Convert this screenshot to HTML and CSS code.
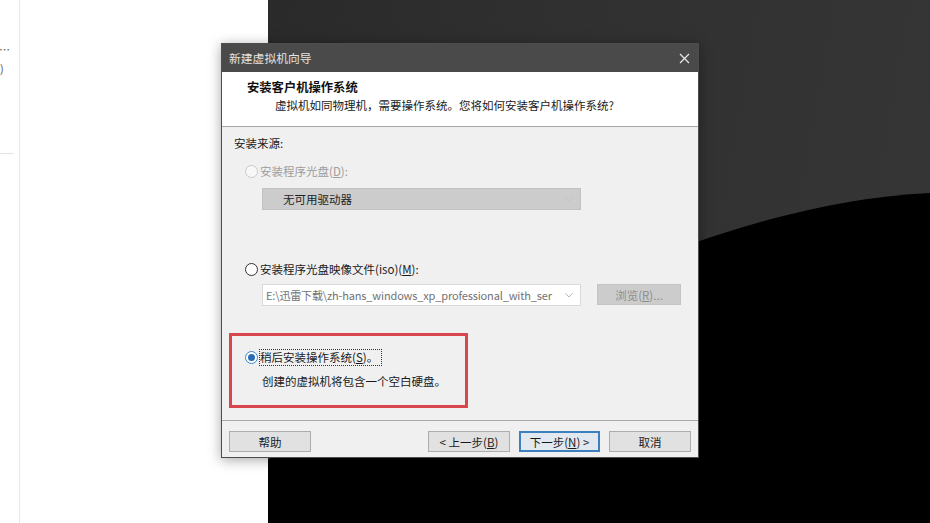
FILE: index.html
```html
<!DOCTYPE html>
<html lang="zh-CN">
<head>
<meta charset="utf-8">
<title>新建虚拟机向导</title>
<link rel="stylesheet" href="styles.css">
</head>
<body>
<div class="desktop">
  <div class="side">
    <div class="rail">
      <div class="rail-t1">…</div>
      <div class="rail-t2">)</div>
      <div class="rail-line"></div>
    </div>
  </div>
  <div class="dark">
    <svg class="curve" viewBox="0 0 662 523" preserveAspectRatio="none">
      <path d="M0,460 Q400,205 662,193 L662,523 L0,523 Z" fill="#000"/>
    </svg>
  </div>

  <div class="dialog">
    <div class="titlebar">
      <span class="title">新建虚拟机向导</span>
      <svg class="close" width="11" height="11" viewBox="0 0 11 11"><path d="M1 1L10 10M10 1L1 10" stroke="#e6e6e6" stroke-width="1.3" fill="none"/></svg>
    </div>
    <div class="header">
      <div class="h-title">安装客户机操作系统</div>
      <div class="h-sub">虚拟机如同物理机，需要操作系统。您将如何安装客户机操作系统?</div>
    </div>
    <div class="body">
      <div class="src-label">安装来源:</div>
      <div class="opt opt1 disabled">
        <span class="radio"></span><span>安装程序光盘(<u>D</u>):</span>
      </div>
      <div class="combo combo1">
        <span class="combo-text">无可用驱动器</span>
        <svg class="chev" width="8" height="5" viewBox="0 0 8 5"><path d="M0.5 0.5L4 4L7.5 0.5" stroke="#c4c4c4" fill="none"/></svg>
      </div>
      <div class="opt opt2">
        <span class="radio"></span><span>安装程序光盘映像文件(iso)(<u>M</u>):</span>
      </div>
      <div class="row2">
        <div class="combo combo2">
          <span class="combo-text">E:\迅雷下载\zh-hans_windows_xp_professional_with_ser</span>
          <svg class="chev" width="8" height="5" viewBox="0 0 8 5"><path d="M0.5 0.5L4 4L7.5 0.5" stroke="#b5b5b5" fill="none"/></svg>
        </div>
        <div class="btn btn-disabled browse"><span>浏览(<u>R</u>)...</span></div>
      </div>
      <div class="redbox">
        <div class="opt opt3">
          <span class="radio checked"></span><span class="focus">稍后安装操作系统(<u>S</u>)。</span>
        </div>
        <div class="opt3-desc">创建的虚拟机将包含一个空白硬盘。</div>
      </div>
    </div>
    <div class="footer">
      <div class="btn help">帮助</div>
      <div class="spacer"></div>
      <div class="btn back"><span>&lt; 上一步(<u>B</u>)</span></div>
      <div class="btn next"><span>下一步(<u>N</u>) &gt;</span></div>
      <div class="btn cancel">取消</div>
    </div>
  </div>
</div>
</body>
</html>
```
FILE: styles.css
```css
html, body {
  margin: 0;
  padding: 0;
}
body {
  width: 930px;
  height: 523px;
  overflow: hidden;
  font-family: "Noto Sans CJK SC", "Noto Sans", sans-serif;
  background: #fff;
}
.desktop {
  position: relative;
  display: flex;
  width: 930px;
  height: 523px;
  overflow: hidden;
}
.side {
  width: 268px;
  background: #fff;
  display: flex;
}
.rail {
  width: 19px;
  border-right: 1px solid #e8e8e8;
  font-size: 11px;
  color: #555;
  display: flex;
  flex-direction: column;
}
.rail-t1 {
  margin-top: 42px;
  line-height: 14px;
  margin-left: -1px;
}
.rail-t2 {
  margin-top: 5px;
  line-height: 14px;
}
.rail-line {
  margin-top: 78px;
  width: 14px;
  height: 1px;
  background: #e3e3e3;
}
.dark {
  flex: 1;
  position: relative;
  background: linear-gradient(100deg, #2a2a2a 0%, #303030 40%, #363636 100%);
}
.curve {
  position: absolute;
  left: 0;
  top: 0;
  width: 100%;
  height: 100%;
}

/* dialog window */
.dialog {
  position: absolute;
  left: 221px;
  top: 43px;
  width: 478px;
  height: 415px;
  box-sizing: border-box;
  border: 1px solid #4d4d4d;
  display: flex;
  flex-direction: column;
  box-shadow: 0 2px 12px rgba(0, 0, 0, 0.35);
  font-size: 11.5px;
  color: #1a1a1a;
  background: #f0f0f0;
}
.titlebar {
  height: 28px;
  flex: none;
  background: #4a4a4a;
  color: #e4e4e4;
  display: flex;
  align-items: center;
  justify-content: space-between;
  padding: 0 8px 0 7px;
}
.title {
  font-size: 11.8px;
  line-height: 16px;
}
.close {
  display: block;
}
.header {
  flex: none;
  height: 47px;
  background: #fff;
  border-bottom: 1px solid #a8a8a8;
  padding: 7px 0 0 25px;
}
.h-title {
  font-weight: bold;
  font-size: 12.3px;
  line-height: 16px;
  color: #111;
}
.h-sub {
  margin-top: 2px;
  margin-left: 28px;
  line-height: 16px;
  color: #1a1a1a;
}
.body {
  flex: 1;
  display: flex;
  flex-direction: column;
  align-items: flex-start;
  padding-top: 8px;
  background: #f0f0f0;
}
.src-label {
  margin-left: 12px;
  line-height: 16px;
}
.opt {
  display: flex;
  align-items: center;
  gap: 2px;
  line-height: 16px;
  height: 16px;
}
.opt1 {
  margin: 12px 0 0 23px;
}
.opt2 {
  margin: 51px 0 0 23px;
}
.disabled {
  color: #9d9d9d;
}
.radio {
  width: 13px;
  height: 13px;
  box-sizing: border-box;
  border-radius: 50%;
  border: 1px solid #333;
  background: #fff;
  position: relative;
  flex: none;
}
.disabled .radio {
  border-color: #cacaca;
  background: #f7f7f7;
}
.radio.checked {
  border-color: #3d86cf;
}
.radio.checked::after {
  content: "";
  position: absolute;
  left: 2px;
  top: 2px;
  width: 7px;
  height: 7px;
  border-radius: 50%;
  background: #2a6db5;
}
.combo {
  width: 319px;
  height: 22px;
  box-sizing: border-box;
  display: flex;
  align-items: center;
  justify-content: space-between;
  padding-right: 7px;
}
.combo1 {
  margin: 9px 0 0 40px;
  background: #cccccc;
  border: 1px solid #c2c2c2;
  padding-left: 20px;
  color: #1e1e1e;
}
.combo2 {
  background: #fff;
  border: 1px solid #dadada;
  padding-left: 3px;
  color: #727272;
}
.combo-text {
  white-space: nowrap;
  line-height: 16px;
}
.combo2 .combo-text {
  font-size: 11px;
  letter-spacing: -0.15px;
}
.chev {
  flex: none;
  display: block;
}
.row2 {
  display: flex;
  align-items: flex-start;
  margin: 7px 0 0 40px;
  gap: 16px;
}
.btn {
  height: 21px;
  box-sizing: border-box;
  display: flex;
  align-items: center;
  justify-content: center;
  border: 1px solid #adadad;
  background: #e1e1e1;
  color: #1a1a1a;
  flex: none;
  line-height: 16px;
  white-space: nowrap;
}
.btn-disabled {
  background: #cccccc;
  border-color: #c4c4c4;
  color: #8e8e8e;
}
.browse {
  width: 84px;
}
.redbox {
  margin: 27px 0 0 7px;
  width: 239px;
  height: 75px;
  box-sizing: border-box;
  border: 3px solid #d8474c;
  padding: 12px 0 0 13px;
  display: flex;
  flex-direction: column;
  align-items: flex-start;
}
.opt3 {
  height: 18px;
}
.focus {
  border: 1px dotted #333;
  padding: 0 3px 0 0;
  margin-left: -1px;
  line-height: 15px;
}
.opt3-desc {
  margin: 7px 0 0 17px;
  line-height: 16px;
}
.footer {
  flex: none;
  height: 37px;
  box-sizing: border-box;
  border-top: 1px solid #a8a8a8;
  padding: 10px 7px 0 7px;
  display: flex;
  align-items: flex-start;
  background: #f0f0f0;
}
.spacer {
  flex: 1;
}
.help, .back, .cancel {
  width: 82px;
}
.next {
  width: 81px;
  margin: 0 9px;
  border: 2px solid #3e7fbd;
  background: #e2e8ef;
}
```
